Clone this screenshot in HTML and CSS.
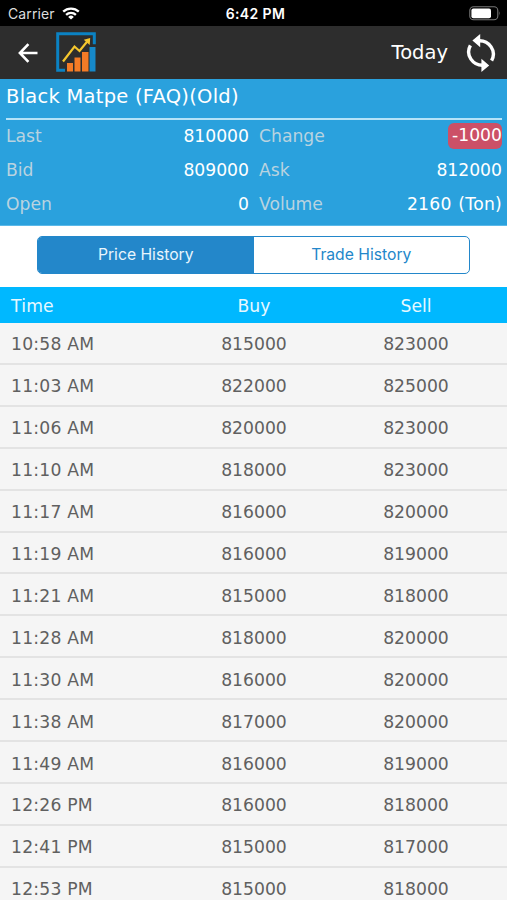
FILE: index.html
```html
<!DOCTYPE html>
<html lang="en">
<head>
    <meta charset="UTF-8">
    <meta name="viewport" content="width=device-width, initial-scale=1.0">
    <title>Price History</title>
    <link rel="stylesheet" href="styles.css">
</head>
<body>
    <div class="status-bar">
        <div class="carrier">
            <span>Carrier</span>
            <svg width="18" height="13" viewBox="0 0 18 13" fill="none" stroke="#fff" stroke-width="2.3">
                <path d="M1.2 4.7a11.2 11.2 0 0 1 15.6 0"/>
                <path d="M4.1 7.9a7 7 0 0 1 9.8 0"/>
                <path d="M9 12.6L6.2 9.9a4 4 0 0 1 5.6 0z" fill="#fff" stroke="none"/>
            </svg>
        </div>
        <div class="clock">6:42 PM</div>
        <div class="battery">
            <svg width="32" height="15" viewBox="0 0 32 15">
                <rect x="0.8" y="0.8" width="28" height="13" rx="3.8" fill="none" stroke="#777" stroke-width="1.1"/>
                <rect x="2.4" y="2.4" width="19.6" height="9.8" rx="2" fill="#fff"/>
                <path d="M30.3 5.2q1.5 2.1 0 4.2z" fill="#777"/>
            </svg>
        </div>
    </div>

    <div class="toolbar">
        <svg class="back" width="20" height="20" viewBox="0 0 20 20" fill="none" stroke="#fff" stroke-width="2.6">
            <path d="M19.5 10H2M10.4 1.2L1.9 10l8.5 8.8"/>
        </svg>
        <svg class="logo" width="41" height="41" viewBox="0 0 41 41">
            <path d="M9 38.2H1.7V1.7h36.6v10.5" fill="none" stroke="#0b82c3" stroke-width="3"/>
            <path d="M33.5 15h6v24.5h-6z" fill="#1689c9"/>
            <path d="M11 31h6v8.5h-6zM18.5 25.5h6v14h-6zM26 20h6.5v19.5H26z" fill="#f47b26"/>
            <path d="M7 29.5L18.5 14.5 23.5 19 32 8.5" fill="none" stroke="#f5c72e" stroke-width="2.2"/>
            <path d="M27.8 7.7L34.2 6l-.5 7z" fill="#f5c72e"/>
        </svg>
        <span class="today">Today</span>
        <svg class="refresh" width="32" height="40" viewBox="0 0 32 40" fill="none" stroke="#fff" stroke-width="3.4">
            <path d="M14 7.7C24 7.4 32 17.8 26.6 27.6"/>
            <path d="M18 32.3C8 32.6 0 22.2 5.4 12.4"/>
            <path d="M15.2 .9v13.4L7.4 7.6zM16.4 25.7v13.4l7.8-6.7z" fill="#fff" stroke="none"/>
        </svg>
    </div>

    <div class="summary">
        <h1>Black Matpe (FAQ)(Old)</h1>
        <div class="quotes">
            <span class="label">Last</span>
            <span class="value">810000</span>
            <span class="label">Change</span>
            <span class="value"><span class="down">-1000</span></span>
            <span class="label">Bid</span>
            <span class="value">809000</span>
            <span class="label">Ask</span>
            <span class="value">812000</span>
            <span class="label">Open</span>
            <span class="value">0</span>
            <span class="label">Volume</span>
            <span class="value volume">2160 (Ton)</span>
        </div>
    </div>

    <div class="tabs">
        <div class="tab active">Price History</div>
        <div class="tab">Trade History</div>
    </div>

    <div class="row header">
        <span>Time</span>
        <span>Buy</span>
        <span>Sell</span>
    </div>
    <div class="list">
        <div class="row"><span>10:58 AM</span><span>815000</span><span>823000</span></div>
        <div class="row"><span>11:03 AM</span><span>822000</span><span>825000</span></div>
        <div class="row"><span>11:06 AM</span><span>820000</span><span>823000</span></div>
        <div class="row"><span>11:10 AM</span><span>818000</span><span>823000</span></div>
        <div class="row"><span>11:17 AM</span><span>816000</span><span>820000</span></div>
        <div class="row"><span>11:19 AM</span><span>816000</span><span>819000</span></div>
        <div class="row"><span>11:21 AM</span><span>815000</span><span>818000</span></div>
        <div class="row"><span>11:28 AM</span><span>818000</span><span>820000</span></div>
        <div class="row"><span>11:30 AM</span><span>816000</span><span>820000</span></div>
        <div class="row"><span>11:38 AM</span><span>817000</span><span>820000</span></div>
        <div class="row"><span>11:49 AM</span><span>816000</span><span>819000</span></div>
        <div class="row"><span>12:26 PM</span><span>816000</span><span>818000</span></div>
        <div class="row"><span>12:41 PM</span><span>815000</span><span>817000</span></div>
        <div class="row"><span>12:53 PM</span><span>815000</span><span>818000</span></div>
    </div>
</body>
</html>
```
FILE: styles.css
```css
* {
    box-sizing: border-box;
}
body {
    font-family: Verdana, 'DejaVu Sans', sans-serif;
    font-size: 17.2px;
    background-color: #fff;
    margin: 0;
    height: 900px;
    overflow: hidden;
    display: flex;
    flex-direction: column;
}
.status-bar {
    flex: none;
    display: grid;
    grid-template-columns: 1fr auto 1fr;
    align-items: center;
    height: 26px;
    padding: 1px 6px 0 8px;
    background-color: #000;
    color: #fff;
    font-family: 'Inter', sans-serif;
    font-size: 14px;
}
.carrier {
    display: flex;
    align-items: center;
    gap: 7px;
    color: #ddd;
    letter-spacing: 0.1px;
}
.clock {
    padding-left: 2px;
    font-weight: 600;
    letter-spacing: 0.4px;
}
.battery {
    display: flex;
    justify-content: flex-end;
}
.toolbar {
    flex: none;
    display: flex;
    align-items: center;
    height: 53px;
    padding: 0 10px 0 18px;
    background-color: #2d2d2d;
    color: #fff;
}
.logo {
    margin-left: 18px;
}
.today {
    margin-left: auto;
    font-size: 19.5px;
}
.refresh {
    margin-left: 17px;
}
.summary {
    flex: none;
    height: 147px;
    padding: 0 5px 0 6px;
    background-color: #2aa1dd;
    border-bottom: 1px solid #5bb9e9;
    color: #fff;
}
.summary h1 {
    margin: 0;
    height: 41px;
    line-height: 36px;
    border-bottom: 2px solid #b5e3f8;
    font-size: 19.5px;
    font-weight: normal;
    letter-spacing: 0.25px;
}
.quotes {
    display: grid;
    grid-template-columns: 70px 173px 90px 1fr;
    grid-template-rows: 32px 36px 32px;
    align-items: center;
}
.label {
    color: #b9d3e0;
}
.value {
    text-align: right;
}
.label:nth-child(4n + 3) {
    padding-left: 10px;
}
.volume {
    word-spacing: 1px;
    letter-spacing: 0.25px;
}
.down {
    display: inline-block;
    height: 26px;
    line-height: 25px;
    padding-left: 4px;
    border-radius: 6px;
    background-color: #cc5067;
}
.tabs {
    flex: none;
    display: flex;
    width: 433px;
    height: 38px;
    margin: 10px 0 13px 37px;
    border: 1px solid #2387ca;
    border-radius: 5px;
    overflow: hidden;
    font-family: 'Inter', sans-serif;
    font-size: 15.7px;
    color: #2387ca;
}
.tab {
    flex: 1;
    line-height: 35px;
    text-align: center;
}
.tab.active {
    background-color: #2387ca;
    color: #e8f5fd;
}
.row {
    flex: none;
    display: grid;
    grid-template-columns: 162px 162px 162px;
    align-items: center;
    height: 41.92px;
    padding: 3px 0 0 11px;
    background-color: #f5f5f5;
    border-bottom: 2px solid #e3e3e3;
    color: #606060;
}
.row span:first-child {
    letter-spacing: 0.2px;
}
.row span + span {
    text-align: center;
}
.header {
    height: 36px;
    padding-top: 2px;
    background-color: #00b8ff;
    border-bottom: none;
    color: #e6f8ff;
}
```
